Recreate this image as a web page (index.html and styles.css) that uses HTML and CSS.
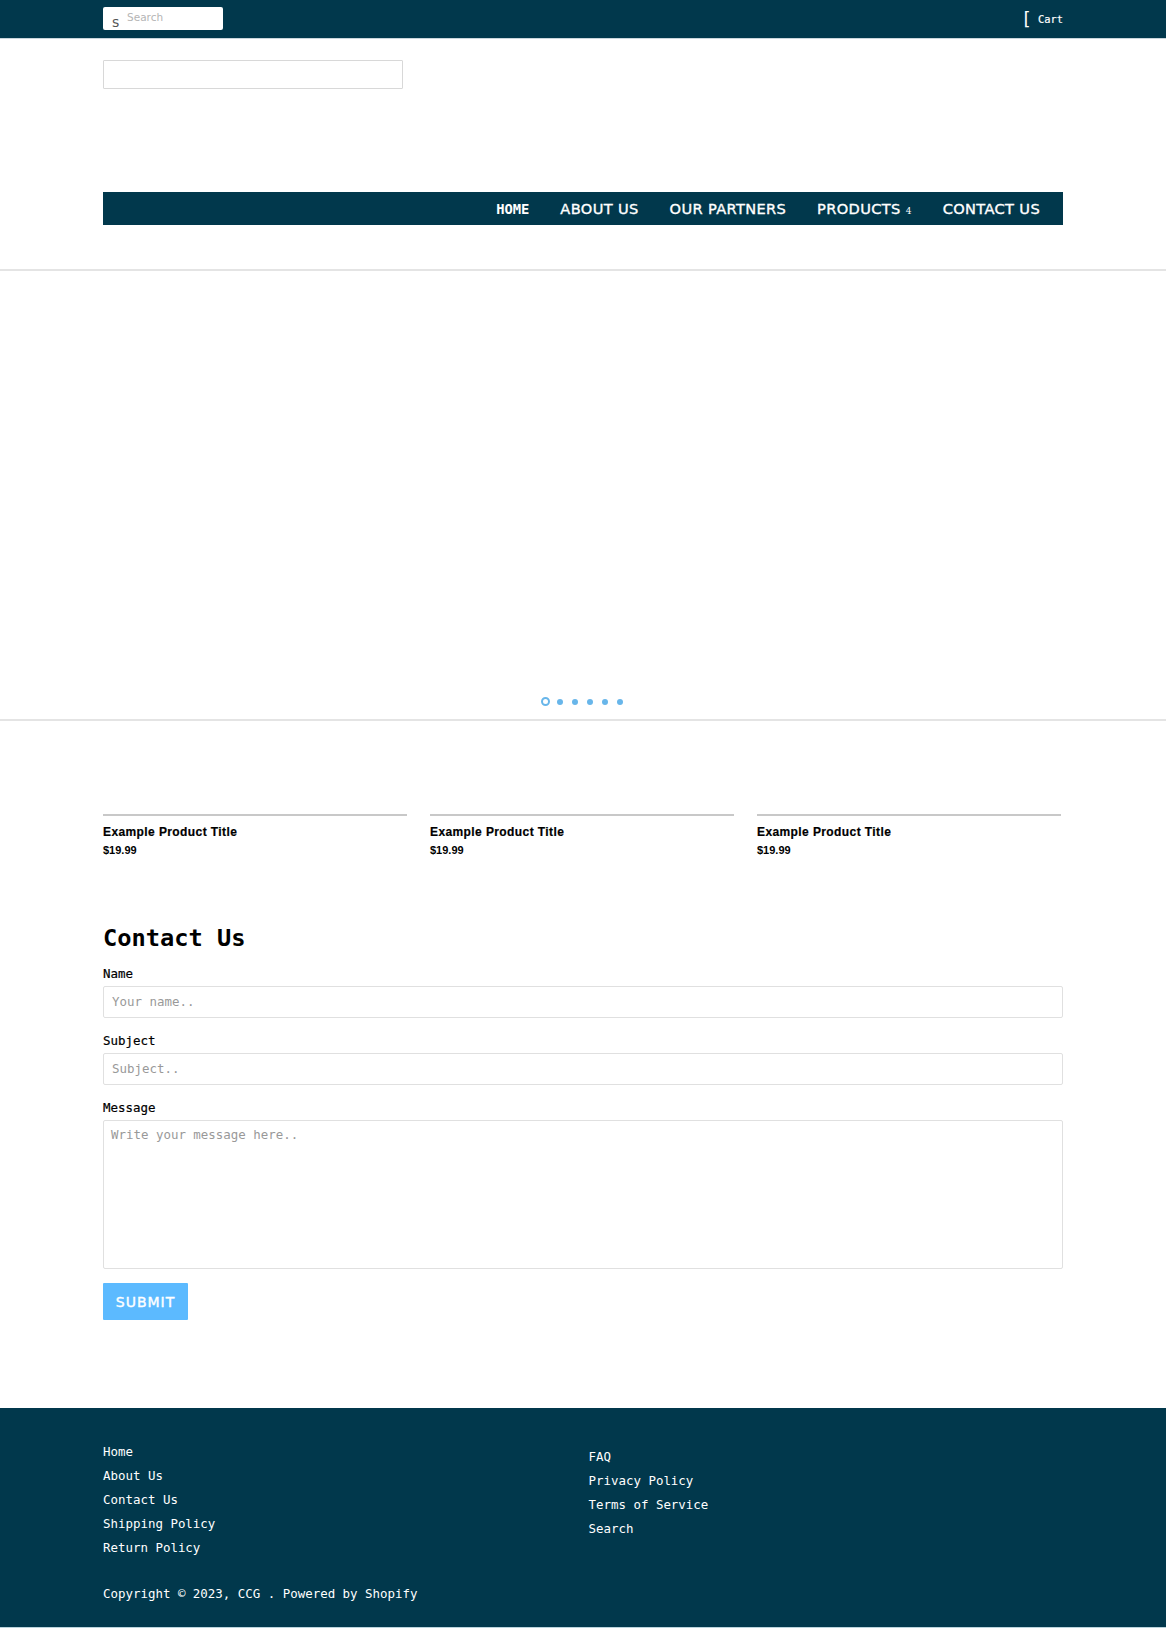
FILE: index.html
```html
<!DOCTYPE html>
<html lang="en">
<head>
<meta charset="utf-8">
<title>CCG</title>
<link rel="stylesheet" href="styles.css">
</head>
<body>
<header class="topbar">
  <div class="wrap topbar-inner">
    <form class="search">
      <span class="search-icon">s</span>
      <span class="search-text">Search</span>
    </form>
    <a class="cart"><span class="cart-icon">[</span><span class="cart-text">Cart</span></a>
  </div>
</header>
<div class="wrap masthead">
  <div class="logo-box"></div>
  <nav class="nav">
    <a class="nav-home">HOME</a>
    <a>ABOUT US</a>
    <a>OUR PARTNERS</a>
    <a>PRODUCTS <span class="caret">4</span></a>
    <a>CONTACT US</a>
  </nav>
</div>
<section class="slider">
  <div class="dots">
    <span class="dot active"></span><span class="dot"></span><span class="dot"></span><span class="dot"></span><span class="dot"></span><span class="dot"></span>
  </div>
</section>
<main class="wrap">
  <div class="products">
    <article class="product"><h3>Example Product Title</h3><p>$19.99</p></article>
    <article class="product"><h3>Example Product Title</h3><p>$19.99</p></article>
    <article class="product"><h3>Example Product Title</h3><p>$19.99</p></article>
  </div>
  <form class="contact">
    <h2>Contact Us</h2>
    <label>Name</label>
    <input class="field" type="text" placeholder="Your name..">
    <label>Subject</label>
    <input class="field" type="text" placeholder="Subject..">
    <label>Message</label>
    <textarea class="field area" placeholder="Write your message here.."></textarea>
    <button class="submit" type="button">SUBMIT</button>
  </form>
</main>
<footer class="footer">
  <div class="wrap">
    <div class="footer-cols">
      <ul class="col-left">
        <li>Home</li><li>About Us</li><li>Contact Us</li><li>Shipping Policy</li><li>Return Policy</li>
      </ul>
      <ul class="col-right">
        <li>FAQ</li><li>Privacy Policy</li><li>Terms of Service</li><li>Search</li>
      </ul>
    </div>
    <p class="copyright">Copyright © 2023, CCG . Powered by Shopify</p>
  </div>
</footer>
</body>
</html>
```
FILE: styles.css
```css
* { box-sizing: border-box; }
html, body { margin: 0; padding: 0; }
body { background: #fff; color: #000; font-family: "DejaVu Sans Mono", monospace; font-size: 12.45px; }
.wrap { width: 960px; margin: 0 auto; }
.topbar { height: 39px; background: #01384c; border-bottom: 1px solid #c9d6dc; }
.topbar-inner { display: flex; justify-content: space-between; align-items: flex-start; padding-top: 7px; }
.search { width: 120px; height: 23px; background: #fff; border-radius: 2px; display: flex; overflow: hidden; }
.search-icon { font: 14px "DejaVu Sans", sans-serif; color: #555; margin: 7px 0 0 9px; width: 15px; }
.search-text { font: 10.5px/21px "DejaVu Sans", sans-serif; color: #b5b5b5; }
.cart { display: flex; color: #fff; align-items: center; height: 23px; }
.cart-icon { font: 18px "DejaVu Sans Mono", monospace; width: 17px; margin-left: -1px; }
.cart-text { font-size: 10.4px; -webkit-text-stroke: .2px #fff; }
.masthead { padding-top: 21px; height: 230px; }
.logo-box { width: 300px; height: 29px; border: 1px solid #d8d8d8; border-radius: 1px; }
.nav { margin-top: 103px; height: 33px; background: #01384c; display: flex; justify-content: flex-end; align-items: center; padding-right: 23px; gap: 31px; }
.nav a { color: #fff; font: 14.6px/18px "DejaVu Sans", sans-serif; letter-spacing: .35px; -webkit-text-stroke: .35px #fff; white-space: nowrap; }
.nav .nav-home { font: bold 13.8px/18px "DejaVu Sans Mono", monospace; letter-spacing: 0; -webkit-text-stroke: 0; }
.caret { font: 9px "DejaVu Serif", serif; -webkit-text-stroke: 0; }
.slider { height: 452px; border-top: 2px solid #e4e4e4; border-bottom: 2px solid #e4e4e4; display: flex; align-items: flex-end; justify-content: center; padding-bottom: 13px; }
.dots { display: flex; gap: 9px; align-items: center; padding-right: 2px; }
.dot { width: 6px; height: 6px; border-radius: 50%; background: #68b6ea; }
.dot.active { width: 9px; height: 9px; margin-right: -2px; background: #fff; border: 2px solid #68b6ea; }
.products { display: flex; gap: 23px; padding-top: 93px; }
.product { width: 304px; border-top: 2px solid #c8c8c8; }
.product h3 { margin: 8px 0 0; font: bold 12px/17px "Liberation Sans", sans-serif; letter-spacing: .4px; -webkit-text-stroke: .2px #000; }
.product p { margin: 2px 0 0; font: bold 11px/15px "Liberation Sans", sans-serif; }
.contact { display: flex; flex-direction: column; align-items: flex-start; padding-top: 65px; }
.contact h2 { margin: 0 0 13px; font: bold 23.7px/30px "DejaVu Sans Mono", monospace; }
.contact label { font: 12.45px/15px "DejaVu Sans Mono", monospace; -webkit-text-stroke: .2px #000; margin-bottom: 5px; }
.field { display: block; width: 100%; height: 32px; margin-bottom: 15px; padding: 0 8px 2px; border: 1px solid #e0e0e0; border-radius: 2px; background: #fff; font: 12.45px "DejaVu Sans Mono", monospace; outline: none; resize: none; }
.field::placeholder { color: #999; opacity: 1; }
.area { height: 149px; padding: 6px 7px 0; margin-bottom: 14px; }
.submit { width: 85px; height: 37px; background: #5cbaff; color: #fff; border: 0; border-radius: 1px; font: 14px "DejaVu Sans", sans-serif; letter-spacing: 1px; -webkit-text-stroke: .4px #fff; padding: 0; }
.footer { margin-top: 88px; height: 220px; background: #01384c; color: #fff; border-bottom: 1px solid #b9d3dc; }
.footer-cols { display: flex; padding-top: 32px; }
.footer ul { list-style: none; margin: 0; padding: 0; }
.footer li { line-height: 23.9px; }
.col-left { width: 485.5px; }
.footer .col-right { padding-top: 5px; }
.copyright { margin: 22px 0 0; line-height: 24px; }
```
